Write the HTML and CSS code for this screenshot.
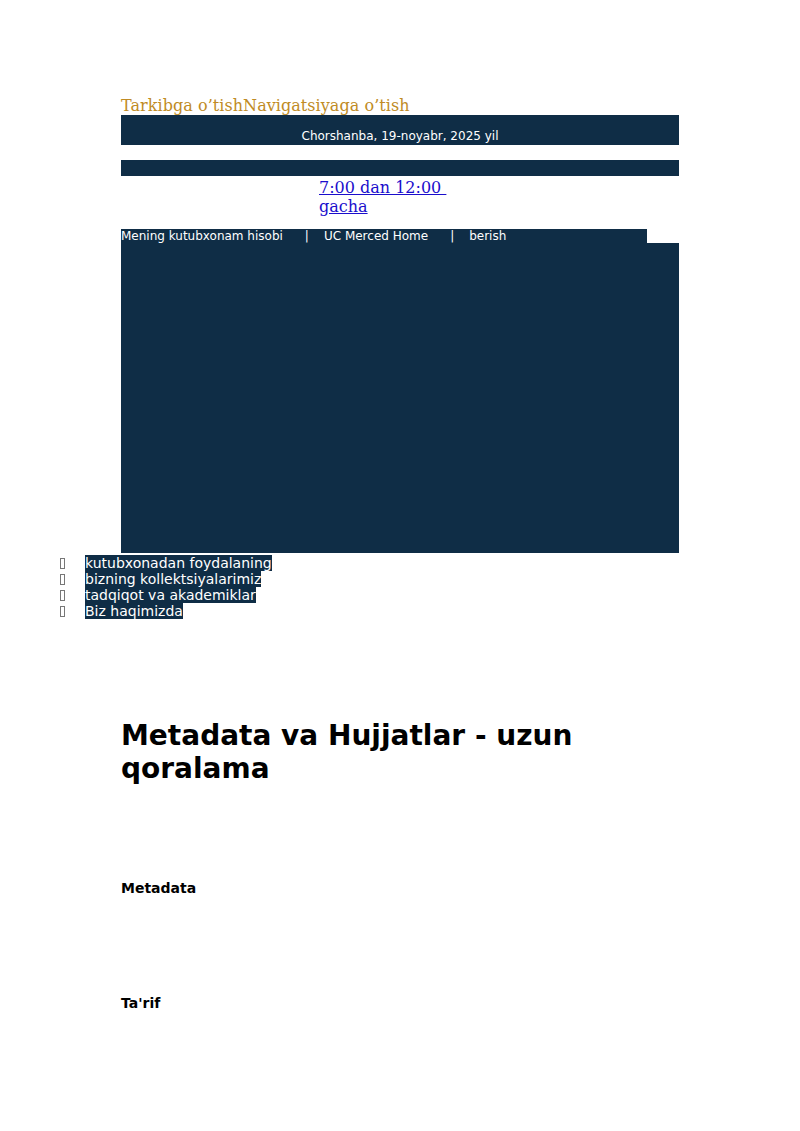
FILE: index.html
```html
<!DOCTYPE html>
<html lang="uz">
<head>
<meta charset="utf-8">
<title>Metadata va Hujjatlar - uzun qoralama</title>
<link rel="stylesheet" href="styles.css">
</head>
<body>
<div class="page">
  <div class="skip"><a href="#main">Tarkibga o’tish</a><a href="#nav">Navigatsiyaga o’tish</a></div>
  <div class="datebar">Chorshanba, 19-noyabr, 2025 yil</div>
  <div class="bar2"></div>
  <div class="hours"><div class="hours-box"><a href="#">7:00 dan 12:00&nbsp; gacha</a></div></div>
  <div class="navtop">
    <span>Mening kutubxonam hisobi</span><span class="sep">|</span><span>UC Merced Home</span><span class="sep">|</span><span>berish</span>
  </div>
  <div class="banner"></div>
</div>
<ul class="menu" id="nav">
  <li><span class="ico"></span><span class="lbl">kutubxonadan foydalaning</span></li>
  <li><span class="ico"></span><span class="lbl">bizning kollektsiyalarimiz</span></li>
  <li><span class="ico"></span><span class="lbl">tadqiqot va akademiklar</span></li>
  <li><span class="ico"></span><span class="lbl">Biz haqimizda</span></li>
</ul>
<main class="page main" id="main">
  <h1 class="title">Metadata va Hujjatlar - uzun qoralama</h1>
  <h3 class="sub">Metadata</h3>
  <h3 class="sub sub2">Ta'rif</h3>
</main>
</body>
</html>
```

FILE: styles.css
```css
html, body {
  margin: 0;
  padding: 0;
  background: #ffffff;
}
body {
  font-family: "DejaVu Sans", sans-serif;
  color: #000;
}
.page {
  width: 558px;
  margin: 0 auto;
}
.page:first-child {
  padding-top: 96px;
}
.skip {
  font-family: "DejaVu Serif", serif;
  font-size: 16px;
  line-height: 19px;
  height: 19px;
  letter-spacing: 0.05px;
}
.skip a {
  color: #c08b25;
  text-decoration: none;
}
.datebar {
  background: #0f2d46;
  color: #ffffff;
  font-size: 12px;
  line-height: 14px;
  height: 30px;
  box-sizing: border-box;
  padding-top: 14px;
  text-align: center;
}
.bar2 {
  margin-top: 15px;
  height: 16px;
  background: #0f2d46;
}
.hours {
  padding: 2px 0 0 198px;
  height: 37px;
  font-family: "DejaVu Serif", serif;
  font-size: 16px;
  line-height: 19px;
}
.hours-box {
  width: 140px;
}
.hours a {
  color: #1a0dcc;
}
.navtop {
  margin-top: 14px;
  width: 526px;
  height: 14px;
  background: #0f2d46;
  color: #ffffff;
  font-size: 12px;
  line-height: 15px;
  white-space: nowrap;
}
.navtop .sep {
  margin: 0 15px 0 22px;
}
.banner {
  height: 310px;
  background: #0f2d46;
}
.menu {
  list-style: none;
  margin: 2px 0 0;
  padding: 0 0 0 60px;
  font-size: 14px;
}
.menu li {
  display: flex;
  align-items: center;
}
.ico {
  width: 3px;
  height: 9px;
  border: 1px solid #777;
  margin-right: 20px;
}
.lbl {
  background: #0f2d46;
  color: #ffffff;
}
.main {
  padding-bottom: 40px;
}
.title {
  margin: 101px 0 0;
  font-size: 28px;
  font-weight: bold;
  line-height: 32.6px;
}
.sub {
  margin: 95px 0 0;
  font-size: 14px;
  font-weight: bold;
  line-height: 16.3px;
}
.sub2 {
  margin-top: 99px;
}
```
